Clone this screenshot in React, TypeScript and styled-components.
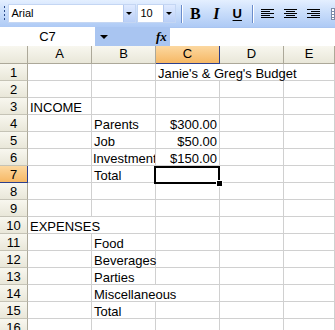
import React from 'react'
import styled, { createGlobalStyle } from 'styled-components'

const GlobalStyle = createGlobalStyle`
  html, body {
    margin: 0;
    padding: 0;
    background: #fff;
    overflow: hidden;
  }
  body {
    font-family: "Liberation Sans", Arial, sans-serif;
  }
`

const Window = styled.div`
  width: 335px;
  height: 330px;
  overflow: hidden;
  display: flex;
  flex-direction: column;
`

/* ---------- toolbar ---------- */

const Toolbar = styled.div`
  height: 27px;
  flex: none;
  display: flex;
  align-items: center;
  box-sizing: border-box;
  padding-left: 4px;
  white-space: nowrap;
  background: linear-gradient(#e4efff 0%, #cadefb 45%, #aecaf5 100%);
`
const Gripper = styled.div`
  width: 2px;
  height: 16px;
  margin-right: 3px;
  background: repeating-linear-gradient(#2b4c8c 0 2px, transparent 2px 4px);
`
const Combo = styled.div<{ $w: number }>`
  width: ${p => p.$w}px;
  height: 19px;
  flex: none;
  box-sizing: border-box;
  display: flex;
  background: #fff;
  border: 1px solid #c4d6f3;
  margin-right: 1px;
`
const ComboText = styled.span`
  flex: 1;
  font-size: 11px;
  line-height: 17px;
  padding-left: 3px;
  color: #000;
`
const DropButton = styled.div`
  width: 11px;
  display: flex;
  align-items: center;
  justify-content: center;
  background: linear-gradient(#dfeaff, #b9cff7);
  border-left: 1px solid #b2c8ef;
`
const Arrow = styled.div`
  width: 0;
  height: 0;
  border-left: 3px solid transparent;
  border-right: 3px solid transparent;
  border-top: 3px solid #000;
`
const Separator = styled.div`
  width: 1px;
  height: 18px;
  margin: 0 4px 0 4px;
  background: #6a8ccb;
  box-shadow: 1px 0 0 #fff;
`
const ToolButton = styled.div<{ $w?: number }>`
  width: ${p => p.$w ?? 21}px;
  height: 20px;
  flex: none;
  display: flex;
  align-items: center;
  justify-content: center;
  color: #000;
`
const BoldGlyph = styled.span`
  font-family: "Liberation Serif", serif;
  font-weight: 700;
  font-size: 16px;
`
const ItalicGlyph = styled.span`
  font-family: "Liberation Serif", serif;
  font-style: italic;
  font-weight: 700;
  font-size: 16px;
`
const UnderGlyph = styled.span`
  font-family: "Liberation Sans", sans-serif;
  font-weight: 700;
  font-size: 13px;
  text-decoration: underline;
  text-underline-offset: 2px;
`
const PartialIcon = styled.div`
  width: 10px;
  height: 12px;
  margin-left: 6px;
  box-sizing: border-box;
  border: 1px solid #7a8ba8;
  background: repeating-linear-gradient(#fff 0 2px, #7a8ba8 2px 3px);
`

function AlignIcon({ kind }: { kind: 'left' | 'center' | 'right' }) {
  const rows = [13, 9, 13, 9, 13]
  return (
    <svg width="13" height="10" viewBox="0 0 13 10">
      {rows.map((w, i) => {
        const x = kind === 'left' ? 0 : kind === 'right' ? 13 - w : (13 - w) / 2
        return <rect key={i} x={x} y={i * 2} width={w} height={1} fill="#000" />
      })}
    </svg>
  )
}

/* ---------- formula bar ---------- */

const FormulaBar = styled.div`
  height: 19px;
  flex: none;
  display: flex;
  background: #a9c5f1;
`
const NameBox = styled.div`
  width: 95px;
  background: #fff;
  text-align: center;
  font-size: 13px;
  line-height: 19px;
  color: #000;
`
const NameDrop = styled.div`
  width: 18px;
  display: flex;
  align-items: center;
  justify-content: center;
`
const NameArrow = styled(Arrow)`
  border-left-width: 4px;
  border-right-width: 4px;
  border-top-width: 4px;
`
const Fx = styled.div`
  margin-left: auto;
  width: 14px;
  font-family: "Liberation Serif", serif;
  font-style: italic;
  font-size: 13px;
  font-weight: 700;
  line-height: 19px;
  color: #000;
`
const FormulaInput = styled.div`
  width: 165px;
  background: #fff;
  margin-top: 1px;
`

/* ---------- sheet ---------- */

const Sheet = styled.div`
  position: relative;
  display: grid;
  grid-template-columns: 28px 64px 64px 64px 64px 1fr;
  grid-template-rows: 18px;
  grid-auto-rows: 17px;
  font-size: 13px;
  color: #000;
`
const ColHead = styled.div<{ $active?: boolean }>`
  box-sizing: border-box;
  text-align: center;
  line-height: 16px;
  border-right: 1px solid ${p => (p.$active ? '#2c3f8c' : '#aca899')};
  border-bottom: 1px solid ${p => (p.$active ? '#2c3f8c' : '#aca899')};
  background: ${p =>
    p.$active
      ? 'linear-gradient(#fcd8a0, #f6b865)'
      : 'linear-gradient(#f8f7ef, #e9e7d9)'};
`
const RowHead = styled.div<{ $active?: boolean }>`
  box-sizing: border-box;
  text-align: center;
  line-height: 14px;
  padding-top: 2px;
  border-right: 1px solid ${p => (p.$active ? '#2c3f8c' : '#aca899')};
  border-bottom: 1px solid ${p => (p.$active ? '#2c3f8c' : '#c5c3b6')};
  background: ${p =>
    p.$active
      ? 'linear-gradient(#fcd8a0, #f6b865)'
      : 'linear-gradient(#f8f7ef, #e9e7d9)'};
`
const Cell = styled.div<{ $span?: number; $right?: boolean; $clip?: boolean }>`
  box-sizing: border-box;
  grid-column: span ${p => p.$span ?? 1};
  border-right: 1px solid #d0d0d0;
  border-bottom: 1px solid #d0d0d0;
  padding: 3px ${p => (p.$clip ? '0 0 1px' : '2px 0 2px')};
  line-height: 14px;
  white-space: nowrap;
  overflow: ${p => (p.$clip ? 'hidden' : 'visible')};
  text-align: ${p => (p.$right ? 'right' : 'left')};
`
const Selection = styled.div`
  position: absolute;
  left: 154px;
  top: 120px;
  width: 66px;
  height: 18px;
  box-sizing: border-box;
  border: 2px solid #000;
  pointer-events: none;
`
const FillHandle = styled.div`
  position: absolute;
  right: -4px;
  bottom: -4px;
  width: 5px;
  height: 5px;
  background: #000;
  box-shadow: 0 0 0 1px #fff;
`

type CellData = { text?: string; span?: number; right?: boolean; clip?: boolean }

const rows: CellData[][] = [
  [{}, {}, { text: "Janie's & Greg's Budget", span: 2 }, {}],
  [{}, {}, {}, {}, {}],
  [{ text: 'INCOME' }, {}, {}, {}, {}],
  [{}, { text: 'Parents' }, { text: '$300.00', right: true }, {}, {}],
  [{}, { text: 'Job' }, { text: '$50.00', right: true }, {}, {}],
  [{}, { text: 'Investment', clip: true }, { text: '$150.00', right: true }, {}, {}],
  [{}, { text: 'Total' }, {}, {}, {}],
  [{}, {}, {}, {}, {}],
  [{}, {}, {}, {}, {}],
  [{ text: 'EXPENSES', span: 2 }, {}, {}, {}],
  [{}, { text: 'Food' }, {}, {}, {}],
  [{}, { text: 'Beverages' }, {}, {}, {}],
  [{}, { text: 'Parties' }, {}, {}, {}],
  [{}, { text: 'Miscellaneous', span: 2 }, {}, {}],
  [{}, { text: 'Total' }, {}, {}, {}],
  [{}, {}, {}, {}, {}],
]

const columns = ['A', 'B', 'C', 'D', 'E']

export default function App() {
  return (
    <Window>
      <GlobalStyle />
      <Toolbar>
        <Gripper />
        <Combo $w={128}>
          <ComboText>Arial</ComboText>
          <DropButton><Arrow /></DropButton>
        </Combo>
        <Combo $w={39}>
          <ComboText>10</ComboText>
          <DropButton><Arrow /></DropButton>
        </Combo>
        <Separator />
        <ToolButton><BoldGlyph>B</BoldGlyph></ToolButton>
        <ToolButton><ItalicGlyph>I</ItalicGlyph></ToolButton>
        <ToolButton><UnderGlyph>U</UnderGlyph></ToolButton>
        <Separator />
        <ToolButton $w={23}><AlignIcon kind="left" /></ToolButton>
        <ToolButton $w={23}><AlignIcon kind="center" /></ToolButton>
        <ToolButton $w={23}><AlignIcon kind="right" /></ToolButton>
        <PartialIcon />
      </Toolbar>
      <FormulaBar>
        <NameBox>C7</NameBox>
        <NameDrop><NameArrow /></NameDrop>
        <Fx>fx</Fx>
        <FormulaInput />
      </FormulaBar>
      <Sheet>
        <ColHead />
        {columns.map(c => (
          <ColHead key={c} $active={c === 'C'}>{c}</ColHead>
        ))}
        {rows.map((row, i) => (
          <React.Fragment key={i}>
            <RowHead $active={i === 6}>{i + 1}</RowHead>
            {row.map((cell, j) => (
              <Cell key={j} $span={cell.span} $right={cell.right} $clip={cell.clip}>
                {cell.text}
              </Cell>
            ))}
          </React.Fragment>
        ))}
        <Selection>
          <FillHandle />
        </Selection>
      </Sheet>
    </Window>
  )
}
